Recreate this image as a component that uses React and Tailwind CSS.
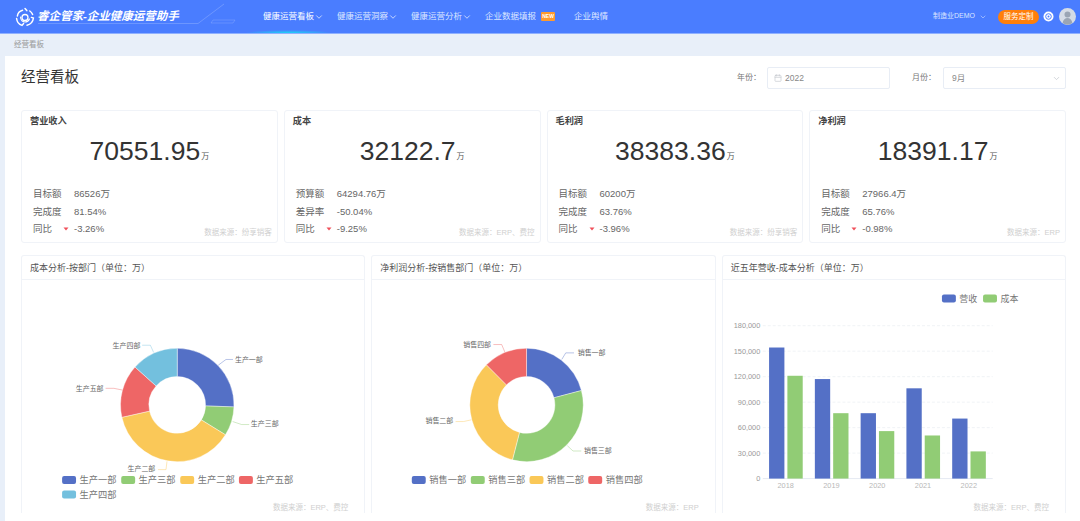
import React from 'react'
import { ChevronDown, Calendar } from 'lucide-react'

const BLUE = '#5470c6'
const GREEN = '#91cc75'
const YELLOW = '#fac858'
const RED = '#ee6666'
const SKY = '#73c0de'

const kpis = [
    { title: '营业收入', value: '70551.95', label: '目标额', target: '86526万', rate: '81.54%', yoy: '-3.26%', source: '数据来源：纷享销客', second: '完成度' },
    { title: '成本', value: '32122.7', label: '预算额', target: '64294.76万', rate: '-50.04%', yoy: '-9.25%', source: '数据来源：ERP、费控', second: '差异率' },
    { title: '毛利润', value: '38383.36', label: '目标额', target: '60200万', rate: '63.76%', yoy: '-3.96%', source: '数据来源：纷享销客', second: '完成度' },
    { title: '净利润', value: '18391.17', label: '目标额', target: '27966.4万', rate: '65.76%', yoy: '-0.98%', source: '数据来源：ERP', second: '完成度' },
]

const navItems = [
    { text: '健康运营看板', arrow: true, active: true },
    { text: '健康运营洞察', arrow: true },
    { text: '健康运营分析', arrow: true },
]

function arcPath(cx, cy, r, R, from, to) {
    const pt = (rad, deg) => {
        const a = (deg * Math.PI) / 180
        return `${cx + rad * Math.sin(a)} ${cy - rad * Math.cos(a)}`
    }
    const large = to - from > 180 ? 1 : 0
    return `M${pt(R, from)}A${R} ${R} 0 ${large} 1 ${pt(R, to)}L${pt(r, to)}A${r} ${r} 0 ${large} 0 ${pt(r, from)}Z`
}

function Legend({ x, y, label, color, w = 14, size = 9.3 }) {
    return (
        <g>
            <rect x={x} y={y - 4} width={w} height={8} rx={2} fill={color} />
            <text x={x + w + 3.5} y={y + 3.2} fontSize={size} fill="#777">{label}</text>
        </g>
    )
}

function Donut({ viewX, cx, segments, legends }) {
    return (
        <svg className="block w-full h-[222px]" viewBox={`${viewX} 280 344 222`}>
            {segments.map((s) => (
                <g key={s.name}>
                    <path d={arcPath(cx, 405, 28.5, 57, s.from, s.to)} fill={s.color} stroke="#fff" strokeWidth="0.4" />
                    <polyline points={s.line} fill="none" stroke={s.color} strokeWidth="0.6" opacity="0.7" />
                    <text x={s.tx} y={s.ty + 2.6} fontSize="7" fill="#666">{s.name}</text>
                </g>
            ))}
            {legends.map((l) => <Legend key={l.label} {...l} />)}
        </svg>
    )
}

const bars = [
    { year: 2018, x: 768.3, a: 347.3, b: 375.7 },
    { year: 2019, x: 814.3, a: 379, b: 413.3 },
    { year: 2020, x: 860.3, a: 413.3, b: 431.3 },
    { year: 2021, x: 906.3, a: 388.3, b: 435.7 },
    { year: 2022, x: 952.3, a: 418.7, b: 451.7 },
]

const ticks = ['0', '30,000', '60,000', '90,000', '120,000', '150,000', '180,000']

function BarChart() {
    return (
        <svg className="block w-full h-[222px]" viewBox="722 280 344 222">
            {ticks.map((t, i) => {
                const y = 479 - i * 25.6
                return (
                    <g key={t}>
                        {i > 0 && <line x1="762" x2="993" y1={y} y2={y} stroke="#e9edf2" strokeWidth="0.7" strokeDasharray="3 2" />}
                        <text x="759.5" y={y + 2.6} fontSize="7.4" fill="#9a9a9a" textAnchor="end">{t}</text>
                    </g>
                )
            })}
            <line x1="762" x2="993" y1="479" y2="479" stroke="#dfe5ee" strokeWidth="0.8" />
            {bars.map((b) => (
                <g key={b.year}>
                    <rect x={b.x} y={b.a} width="15.4" height={479 - b.a} fill={BLUE} />
                    <rect x={b.x + 18.4} y={b.b} width="15.4" height={479 - b.b} fill={GREEN} />
                    <text x={b.x + 16.7} y="488.6" fontSize="7.4" fill="#b8b8b8" textAnchor="middle">{b.year}</text>
                </g>
            ))}
            <Legend x={942} y={298} label="营收" color={BLUE} size={9} />
            <Legend x={983.3} y={298} label="成本" color={GREEN} size={9} />
        </svg>
    )
}

function Logo() {
    return (
        <svg width="20" height="20" viewBox="0 0 20 20" fill="none" stroke="#fff" strokeWidth="1.5" strokeLinecap="round">
            <path d="M10 1.5 L11.8 3.6 M7.6 3.2 C4.6 4 2.7 6.3 2.4 9" />
            <path d="M1.6 11.5 C2 15 4 17.4 7 18.4 L8.6 16.6" />
            <path d="M12 18.2 C15.6 17.4 18 14.6 18.4 11 L16.4 10.4" />
            <path d="M17.6 7.5 C17 6 16 4.8 14.8 4" />
            <circle cx="10" cy="10.5" r="3" strokeWidth="1.3" />
            <path d="M5.6 10 C5.6 13.4 8 15 10 15 C12 15 13.6 14 14.4 12" strokeWidth="1.2" />
        </svg>
    )
}

function KpiCard({ item }) {
    return (
        <div className="relative h-[133px] rounded-[3px] border border-[#f0f3f8] bg-white">
            <h3 className="pl-2 pt-[3px] text-[9.2px] leading-[14px] font-bold text-[#444]">{item.title}</h3>
            <div className="mt-[5px] flex h-[37px] items-end justify-center text-[#333]">
                <span className="text-[26.5px] leading-[37px]">{item.value}</span>
                <span className="mb-[8px] ml-px text-[8px] leading-[10px] text-[#555]">万</span>
            </div>
            <div className="mt-[15px] pl-[11px] text-[9.5px] leading-[17.5px] text-[#666]">
                <div className="flex">
                    <span className="w-[41px]">{item.label}</span>
                    <span>{item.target}</span>
                </div>
                <div className="flex">
                    <span className="w-[41px]">{item.second}</span>
                    <span>{item.rate}</span>
                </div>
                <div className="flex items-center">
                    <span className="w-[27px]">同比</span>
                    <svg className="w-[14px] h-[6px]" viewBox="0 0 14 6"><path d="M3.5 1.5h5L6 4.5z" fill="#f0505a" /></svg>
                    <span>{item.yoy}</span>
                </div>
            </div>
            <span className="absolute right-[5px] bottom-[4px] text-[7.5px] leading-[10px] text-[#cfcfcf]">{item.source}</span>
        </div>
    )
}

function ChartCard({ title, source, children }) {
    return (
        <div className="rounded-t-[3px] border border-b-0 border-[#f0f3f8] bg-white">
            <h3 className="h-[24px] border-b border-[#f0f3f8] pl-2 text-[9px] leading-[24px] text-[#555]">{title}</h3>
            {children}
            <p className="pr-[16px] text-right text-[7.5px] leading-[11px] text-[#cfcfcf]">{source}</p>
        </div>
    )
}

const costSegments = [
    { name: '生产一部', color: BLUE, from: 0, to: 92, line: '218.3,365 226,359.3 233,359.3', tx: 235, ty: 359 },
    { name: '生产三部', color: GREEN, from: 92, to: 121.8, line: '232.7,421.7 241.7,424.7 249.3,424.7', tx: 251, ty: 423.5 },
    { name: '生产二部', color: YELLOW, from: 121.8, to: 257.4, line: '166.7,461.7 165.7,470 157.7,470', tx: 127, ty: 468.5 },
    { name: '生产五部', color: RED, from: 257.4, to: 311.9, line: '121.7,390 113.3,388.3 105,388.3', tx: 75, ty: 388 },
    { name: '生产四部', color: SKY, from: 311.9, to: 360, line: '153.3,352.3 150,345 141.7,345', tx: 112, ty: 344.7 },
]

const costLegends = [
    { x: 61.3, y: 480.5, label: '生产一部', color: BLUE },
    { x: 120.7, y: 480.5, label: '生产三部', color: GREEN },
    { x: 180, y: 480.5, label: '生产二部', color: YELLOW },
    { x: 239, y: 480.5, label: '生产五部', color: RED },
    { x: 61.3, y: 495, label: '生产四部', color: SKY },
]

const profitSegments = [
    { name: '销售一部', color: BLUE, from: 0, to: 75.3, line: '562.7,359.3 566.7,352.7 575,352.7', tx: 578.7, ty: 352.3 },
    { name: '销售三部', color: GREEN, from: 75.3, to: 194.4, line: '568.3,446 574,451.3 582.3,451.3', tx: 585, ty: 450.7 },
    { name: '销售二部', color: YELLOW, from: 194.4, to: 315, line: '471.7,420 464,421.7 456,421.7', tx: 425.7, ty: 421 },
    { name: '销售四部', color: RED, from: 315, to: 360, line: '505.7,352.3 502.3,344.3 494,344.3', tx: 463.7, ty: 344 },
]

const profitLegends = [
    { x: 412, y: 480.5, label: '销售一部', color: BLUE },
    { x: 471.3, y: 480.5, label: '销售三部', color: GREEN },
    { x: 530.3, y: 480.5, label: '销售二部', color: YELLOW },
    { x: 589.3, y: 480.5, label: '销售四部', color: RED },
]

export default function App() {
    return (
        <div className="h-[521px] w-[1080px] overflow-hidden bg-[#e8eff9] [font-family:'Liberation_Sans','Noto_Sans_CJK_SC',sans-serif]">
            <header className="relative flex h-[34px] items-center border-b border-[#8fb0ff] bg-[#4a7dff] text-white">
                <svg className="absolute left-0 top-0 h-[33px] w-[240px]" viewBox="0 0 240 33" fill="none">
                    <path d="M38 23.5H198L224 4" stroke="#ffffff" strokeOpacity="0.28" strokeWidth="0.7" />
                    <path d="M213 20h22l-2 3h-22z" stroke="#ffffff" strokeOpacity="0.3" strokeWidth="0.5" />
                </svg>
                <div className="relative flex w-[263px] shrink-0 items-center gap-[2px] pl-[15px]">
                    <Logo />
                    <span className="text-[11.5px] font-bold italic">睿企管家-企业健康运营助手</span>
                </div>
                <nav className="flex items-center text-[8.5px]">
                    {navItems.map((n) => (
                        <div key={n.text} className="relative mr-[13px] flex h-[33px] items-center">
                            <span className={n.active ? 'text-white' : 'text-[#dbe6ff]'}>{n.text}</span>
                            <ChevronDown className="h-[10px] w-[10px] text-[#dbe6ff]" />
                            {n.active && <i className="absolute -left-[18px] -right-[8px] bottom-0 h-[3px] bg-[radial-gradient(ellipse_at_bottom,#19d8f5,transparent_70%)]" />}
                        </div>
                    ))}
                    <span className="text-[#dbe6ff]">企业数据填报</span>
                    <span className="ml-[5px] flex h-[9px] w-[14px] items-center justify-center rounded-[1px] bg-[#ff9a2e] text-[5px] font-bold leading-none">NEW</span>
                    <span className="ml-[19px] text-[#dbe6ff]">企业舆情</span>
                </nav>
                <div className="ml-auto flex items-center pr-[4px]">
                    <span className="text-[7px] text-[#dbe6ff]">制造业DEMO</span>
                    <ChevronDown className="ml-[4px] h-[8px] w-[8px] text-[#bcd0ff]" />
                    <button className="ml-[11px] h-[14px] w-[41px] rounded-full bg-[#ff7f0a] text-[7.5px] leading-[14px] text-white">服务定制</button>
                    <svg className="ml-[4px]" width="11" height="11" viewBox="0 0 11 11">
                        <circle cx="5.5" cy="5.5" r="5" fill="#fff" />
                        <circle cx="5.5" cy="5.5" r="2.8" fill="none" stroke="#4a7dff" strokeWidth="1" />
                        <circle cx="5.5" cy="5.5" r="1" fill="#4a7dff" />
                    </svg>
                    <svg className="ml-[5px]" width="17" height="17" viewBox="0 0 17 17">
                        <circle cx="8.5" cy="8.5" r="8.5" fill="#d5dce6" />
                        <circle cx="8.5" cy="6.6" r="3" fill="#9aa5b4" />
                        <path d="M3.6 15c.6-3.4 2.6-5 4.9-5s4.3 1.6 4.9 5a8.5 8.5 0 0 1-9.8 0z" fill="#9aa5b4" />
                    </svg>
                </div>
            </header>
            <div className="h-[22px] pl-[14px] text-[7.5px] leading-[22px] text-[#9a9a9a]">经营看板</div>
            <main className="ml-[5px] h-[465px] bg-white pl-[16px] pr-[14px]">
                <div className="flex h-[54px] items-center justify-between pb-[10px]">
                    <h1 className="text-[14.5px] text-[#333]">经营看板</h1>
                    <div className="flex items-center text-[8px] text-[#777]">
                        <span>年份：</span>
                        <div className="ml-[6px] flex h-[22px] w-[123px] items-center rounded-[2px] border border-[#e8edf5] pl-[6px] text-[8.5px] text-[#888]">
                            <Calendar className="mr-[3px] h-[8px] w-[8px] text-[#c4c8cf]" />
                            2022
                        </div>
                        <span className="ml-[22px]">月份：</span>
                        <div className="ml-[7px] flex h-[22px] w-[123px] items-center justify-between rounded-[2px] border border-[#e8edf5] pl-[8px] pr-[4px] text-[8.5px] text-[#888]">
                            9月
                            <ChevronDown className="h-[9px] w-[9px] text-[#c4c8cf]" />
                        </div>
                    </div>
                </div>
                <div className="grid grid-cols-4 gap-[6px]">
                    {kpis.map((k) => <KpiCard key={k.title} item={k} />)}
                </div>
                <div className="mt-[12px] grid grid-cols-3 gap-[6px]">
                    <ChartCard title="成本分析-按部门（单位：万）" source="数据来源：ERP、费控">
                        <Donut viewX={21} cx={177} segments={costSegments} legends={costLegends} />
                    </ChartCard>
                    <ChartCard title="净利润分析-按销售部门（单位：万）" source="数据来源：ERP">
                        <Donut viewX={372} cx={527.3} segments={profitSegments} legends={profitLegends} />
                    </ChartCard>
                    <ChartCard title="近五年营收-成本分析（单位：万）" source="数据来源：ERP、费控">
                        <BarChart />
                    </ChartCard>
                </div>
            </main>
        </div>
    )
}
